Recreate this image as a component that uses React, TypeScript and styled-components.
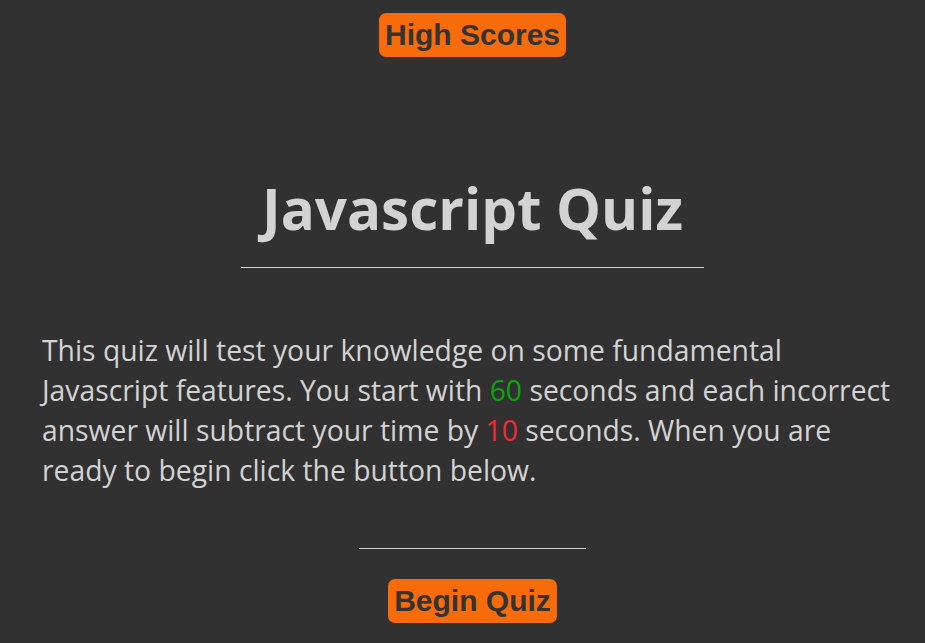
import React from "react";
import styled, { createGlobalStyle } from "styled-components";

const Global = createGlobalStyle`
  html, body { margin: 0; padding: 0; background: #313131; }
  body { font-family: "Open Sans", "Noto Sans", sans-serif; color: #d3d3d3; }
`;

const Page = styled.div`
  display: flex;
  flex-direction: column;
  align-items: center;
  min-height: 643px;
  padding: 13px 0 0 20px;
  box-sizing: border-box;
`;

const OrangeButton = styled.button`
  font-family: "Liberation Sans", Arial, sans-serif;
  font-weight: bold;
  font-size: 30px;
  line-height: 34px;
  color: #333;
  background: #f76b0a;
  border: none;
  border-radius: 7px;
  padding: 5px 6px;
  cursor: pointer;
`;

const Title = styled.h1`
  margin: 114px 0 0;
  font-size: 56.5px;
  font-weight: 700;
  line-height: 76px;
  color: #d3d3d3;
`;

const Rule = styled.hr<{ $w: number }>`
  width: ${(p) => p.$w}px;
  border: none;
  border-top: 1px solid #d3d3d3;
  margin: ${(p) => (p.$w > 300 ? "20px 0 0" : "0")};
`;

const Intro = styled.p`
  align-self: stretch;
  margin: 62px 18px 0 22px;
  font-size: 28.3px;
  line-height: 40px;
  color: #d3d3d3;
`;

const Good = styled.span`
  color: #0ca30c;
`;

const Bad = styled.span`
  color: #ee2b36;
`;

const Bottom = styled.div`
  display: flex;
  flex-direction: column;
  align-items: center;
  gap: 30px;
  margin-top: 58px;
`;

export default function App() {
  return (
    <>
      <Global />
      <Page>
        <OrangeButton>High Scores</OrangeButton>
        <Title>Javascript Quiz</Title>
        <Rule $w={463} />
        <Intro>
          This quiz will test your knowledge on some fundamental Javascript
          features. You start with <Good>60</Good> seconds and each incorrect
          answer will subtract your time by <Bad>10</Bad> seconds. When you are
          ready to begin click the button below.
        </Intro>
        <Bottom>
          <Rule $w={227} />
          <OrangeButton>Begin Quiz</OrangeButton>
        </Bottom>
      </Page>
    </>
  );
}
